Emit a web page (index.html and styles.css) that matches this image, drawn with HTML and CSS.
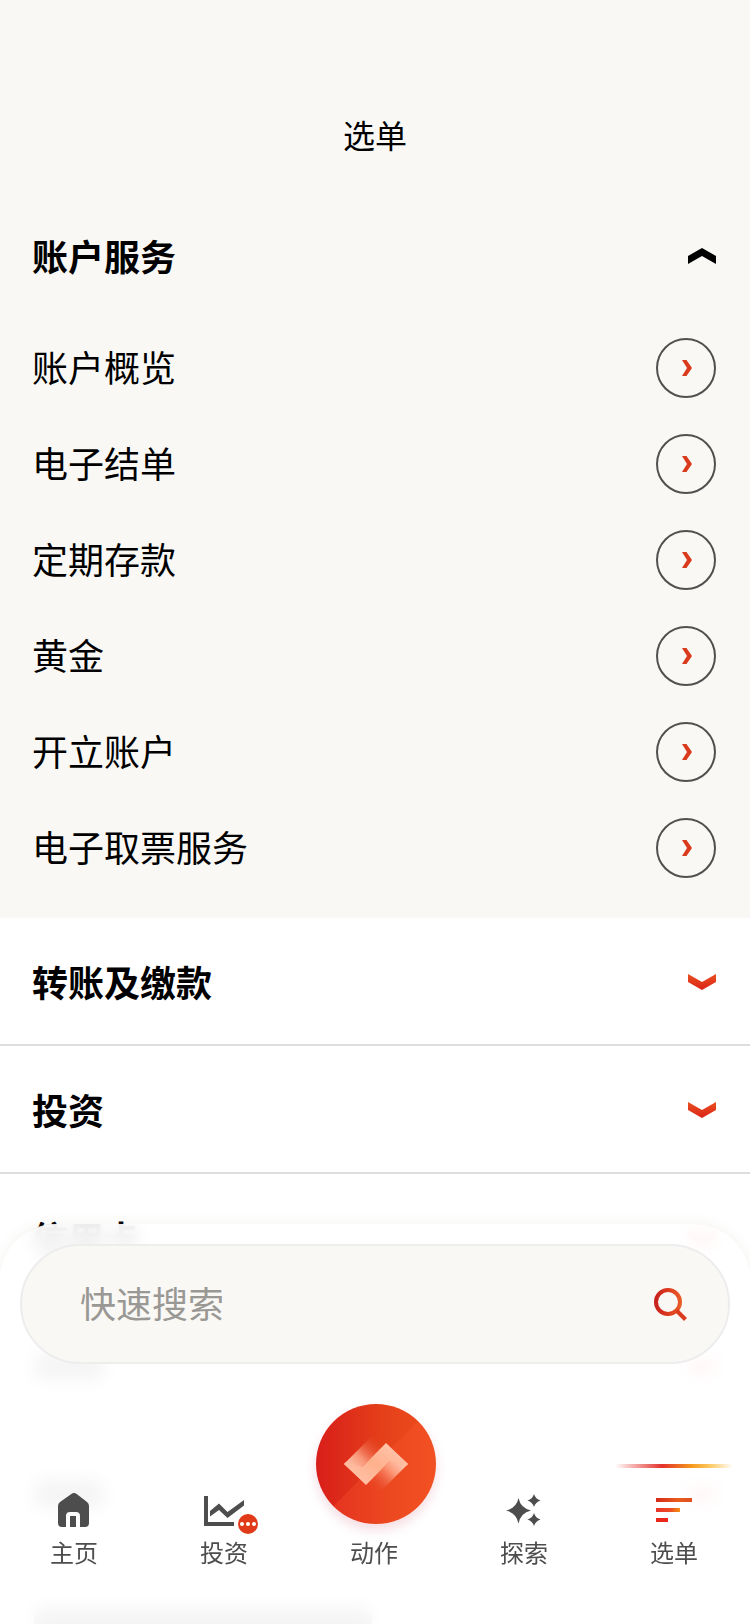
FILE: index.html
```html
<!DOCTYPE html>
<html lang="zh-CN">
	<head>
		<title>选单</title>
		<meta charset="utf-8">
		<link rel="stylesheet" href="styles.css">
	</head>
	<body>
		<!-- shared gradients and icons -->
		<svg class="defs" width="0" height="0">
			<defs>
				<linearGradient id="red" x1="0" y1="0" x2="1" y2="0">
					<stop offset="0" stop-color="#c8221c"/>
					<stop offset=".5" stop-color="#dc3a1c"/>
					<stop offset="1" stop-color="#e85a26"/>
				</linearGradient>
				<linearGradient id="down" x1="0" y1="0" x2="0" y2="1">
					<stop offset="0" stop-color="#e8501f"/>
					<stop offset="1" stop-color="#dc2218"/>
				</linearGradient>
				<symbol id="arrow" viewBox="0 0 10 16">
					<path d="M0 0H4.500L10 8L4.500 16H0L5 8Z" fill="#d93a1c"/>
				</symbol>
				<symbol id="chev" viewBox="0 0 28 16">
					<path d="M0 0L14 8L28 0V8L14 16L0 8Z" fill="url(#down)"/>
				</symbol>
			</defs>
		</svg>
		<div class="page">
			<div class="open">
				<h1 class="title">选单</h1>
				<div class="head"><span class="txt">账户服务</span>
					<svg width="28" height="16" viewBox="0 0 28 16"><path d="M0 8L14 0L28 8V16L14 8L0 16Z"/></svg>
				</div>
				<div class="item"><span class="txt">账户概览</span><span class="go"><svg width="10" height="16"><use href="#arrow"/></svg></span></div>
				<div class="item"><span class="txt">电子结单</span><span class="go"><svg width="10" height="16"><use href="#arrow"/></svg></span></div>
				<div class="item"><span class="txt">定期存款</span><span class="go"><svg width="10" height="16"><use href="#arrow"/></svg></span></div>
				<div class="item"><span class="txt">黄金</span><span class="go"><svg width="10" height="16"><use href="#arrow"/></svg></span></div>
				<div class="item"><span class="txt">开立账户</span><span class="go"><svg width="10" height="16"><use href="#arrow"/></svg></span></div>
				<div class="item"><span class="txt">电子取票服务</span><span class="go"><svg width="10" height="16"><use href="#arrow"/></svg></span></div>
			</div>
			<div class="head line"><span class="txt">转账及缴款</span><svg width="28" height="16"><use href="#chev"/></svg></div>
			<div class="head line"><span class="txt">投资</span><svg width="28" height="16"><use href="#chev"/></svg></div>
			<div class="head"><span class="txt">信用卡</span><svg width="28" height="16"><use href="#chev"/></svg></div>
			<div class="head"><span class="bar"></span><svg width="28" height="16"><use href="#chev"/></svg></div>
			<div class="head"><span class="bar"></span><svg width="28" height="16"><use href="#chev"/></svg></div>
			<div class="head"><span class="bar long"></span></div>
		</div>

		<div class="dock">
			<div class="search">
				<span class="txt">快速搜索</span>
				<svg width="34" height="34" viewBox="0 0 34 34" fill="none" stroke="url(#red)" stroke-width="4">
					<circle cx="14" cy="14" r="12"/>
					<path d="M22.500 22.500L31.500 31.500" stroke="#dc3a1c"/>
				</svg>
			</div>
			<div class="nav">
				<div class="tab">
					<div class="icon">
						<svg width="32" height="36" viewBox="0 0 32 36">
							<path d="M13 1.200Q16 -1 19 1.200L29 9Q31 10.600 31 13V30Q31 34 27 34H22V23Q22 19 18 19H12Q8 19 8 23V34H4Q0 34 0 30V13Q0 10.600 2 9Z" fill="#4d4d4d"/>
							<path d="M12 23H18V34H12Z" fill="#4d4d4d"/>
						</svg>
					</div>
					主页
				</div>
				<div class="tab">
					<div class="icon chart">
						<svg width="42" height="32" viewBox="0 0 42 32">
							<path d="M0 0H4V26H30V30H0Z" fill="#4d4d4d"/>
							<path d="M6 15L15 7.500L23.500 16L40 4V9.500L23.500 22L15 14L6 20.500Z" fill="#4d4d4d"/>
						</svg>
						<span class="badge"><i></i><i></i><i></i></span>
					</div>
					投资
				</div>
				<div class="tab">
					<div class="action">
						<svg width="64" height="60" viewBox="0 0 64 60">
							<defs>
								<linearGradient id="fadeA" gradientUnits="userSpaceOnUse" x1="8" y1="34" x2="36" y2="6">
									<stop offset="0" stop-color="#ffc0a6"/>
									<stop offset=".35" stop-color="#f89476"/>
									<stop offset="1" stop-color="#e4421c" stop-opacity="0"/>
								</linearGradient>
								<linearGradient id="fadeB" gradientUnits="userSpaceOnUse" x1="56" y1="26" x2="28" y2="54">
									<stop offset="0" stop-color="#ffc8b0"/>
									<stop offset=".35" stop-color="#fc9878"/>
									<stop offset="1" stop-color="#e8482a" stop-opacity="0"/>
								</linearGradient>
								<linearGradient id="band" x1="0" y1="1" x2="1" y2="0">
									<stop offset="0" stop-color="#ffc8b2"/>
									<stop offset=".5" stop-color="#ffb08c"/>
									<stop offset="1" stop-color="#ffccb8"/>
								</linearGradient>
							</defs>
							<path d="M0 30L30 0L41 10L11 40Z" fill="url(#fadeA)"/>
							<path d="M64 30L34 60L23 50L53 20Z" fill="url(#fadeB)"/>
							<path d="M0 30L2 28L18 33L42 9L64 30L62 32L46 27L22 51Z" fill="url(#band)"/>
						</svg>
					</div>
					动作
				</div>
				<div class="tab">
					<div class="icon stars">
						<svg width="36" height="34" viewBox="0 0 36 34" fill="#4d4d4d">
							<path d="M12.500 4Q14.500 14 25 16.500Q14.500 19 12.500 29.500Q10.500 19 0 16.500Q10.500 14 12.500 4Z"/>
							<path d="M28 0Q29.500 5 34.500 6.500Q29.500 8 28 13Q26.500 8 21.500 6.500Q26.500 5 28 0Z"/>
							<path d="M28 19Q29.500 24 34.500 25.500Q29.500 27 28 32Q26.500 27 21.500 25.500Q26.500 24 28 19Z"/>
						</svg>
					</div>
					探索
				</div>
				<div class="tab">
					<div class="marker"></div>
					<div class="icon">
						<div class="bars"><i></i><i></i><i></i></div>
					</div>
					选单
				</div>
			</div>
		</div>
	</body>
</html>
```
FILE: styles.css
```css
* {
	box-sizing: border-box;
}
body {
	margin: 0;
	height: 1624px;
	overflow: hidden;
	font-family: "Noto Sans CJK SC", sans-serif;
	color: #000;
	background: #fff;
}
.defs {
	position: absolute;
}
.page {
	height: 1624px;
	overflow: hidden;
}
.open {
	background: #f9f8f5;
	padding: 80px 0 22px;
}
.title {
	margin: 0;
	height: 112px;
	line-height: 108px;
	text-align: center;
	font-size: 32px;
	font-weight: 400;
}
.head, .item {
	display: flex;
	align-items: center;
	justify-content: space-between;
	padding: 0 34px 0 32px;
	font-size: 36px;
}
.head {
	height: 128px;
	font-weight: 700;
}
.txt {
	padding-bottom: 4px;
}
.head .txt {
	padding-bottom: 2px;
}
.line {
	box-shadow: inset 0 -2px #dedede;
}
.item {
	height: 96px;
}
.go {
	width: 60px;
	height: 60px;
	padding-left: 2px;
	border: 2px solid #505050;
	border-radius: 50%;
	display: flex;
	align-items: center;
	justify-content: center;
}
.bar {
	width: 70px;
	height: 28px;
	margin-left: 2px;
	border-radius: 8px;
	background: #888;
}
.long {
	width: 338px;
}

/* bottom panel over the list */
.dock {
	position: fixed;
	left: 0;
	right: 0;
	bottom: 0;
	height: 400px;
	padding: 20px 20px 0;
	border-radius: 56px 56px 0 0;
	background: rgba(255,255,255,.91);
	backdrop-filter: blur(9px);
	box-shadow: 0 0 14px rgba(120,110,80,.09);
}
.search {
	height: 120px;
	padding: 0 40px 0 58px;
	border: 2px solid #ededee;
	border-radius: 60px;
	background: #f9f8f5;
	display: flex;
	align-items: center;
	justify-content: space-between;
	font-size: 36px;
	color: #999894;
}
.search svg {
	margin-top: 2px;
}
.nav {
	display: flex;
	margin: 0 -19px 0 -21px;
}
.tab {
	flex: 1;
	height: 206px;
	position: relative;
	display: flex;
	flex-direction: column;
	align-items: center;
	justify-content: flex-end;
	font-size: 24px;
	line-height: 36px;
	color: #4d4d4d;
}
.icon {
	height: 41px;
	position: relative;
	display: flex;
}
.chart {
	padding: 3px 0 0 2px;
}
.stars {
	padding-top: 1px;
}
.badge {
	position: absolute;
	right: -12px;
	top: 21px;
	width: 20px;
	height: 20px;
	border-radius: 50%;
	background: #e03a18;
	display: flex;
	align-items: center;
	justify-content: center;
	gap: 2px;
}
.badge i {
	width: 4px;
	height: 4px;
	border-radius: 50%;
	background: #fff;
}
.action {
	width: 120px;
	height: 120px;
	margin: 0 0 10px 4px;
	border-radius: 50%;
	background: linear-gradient(135deg, transparent 50%, rgba(255,90,50,.25) 50%), linear-gradient(90deg, #d81e1a, #e6421a 60%, #ee4e1e);
	box-shadow: 0 6px 12px rgba(180,20,60,.15);
	display: flex;
	align-items: center;
	justify-content: center;
}
.marker {
	position: absolute;
	top: 100px;
	left: 16px;
	width: 118px;
	height: 4px;
	background: linear-gradient(90deg, rgba(230,50,40,0), #e4322c 40%, #f59a1c 65%, #fcc860 80%, rgba(255,220,140,0));
}
.bars {
	display: flex;
	flex-direction: column;
	gap: 6px;
	width: 38px;
	padding: 5px 0 0 1px;
}
.bars i {
	height: 4px;
	width: 36px;
	background: linear-gradient(90deg, #d62a1c, #e85c1c 60%, #e05020);
}
.bars i:nth-child(2) {
	width: 24px;
	background: linear-gradient(90deg, #e8352a, #ec4c22 60%, #f59016);
}
.bars i:nth-child(3) {
	width: 12px;
	background: #e8281c;
}
```
